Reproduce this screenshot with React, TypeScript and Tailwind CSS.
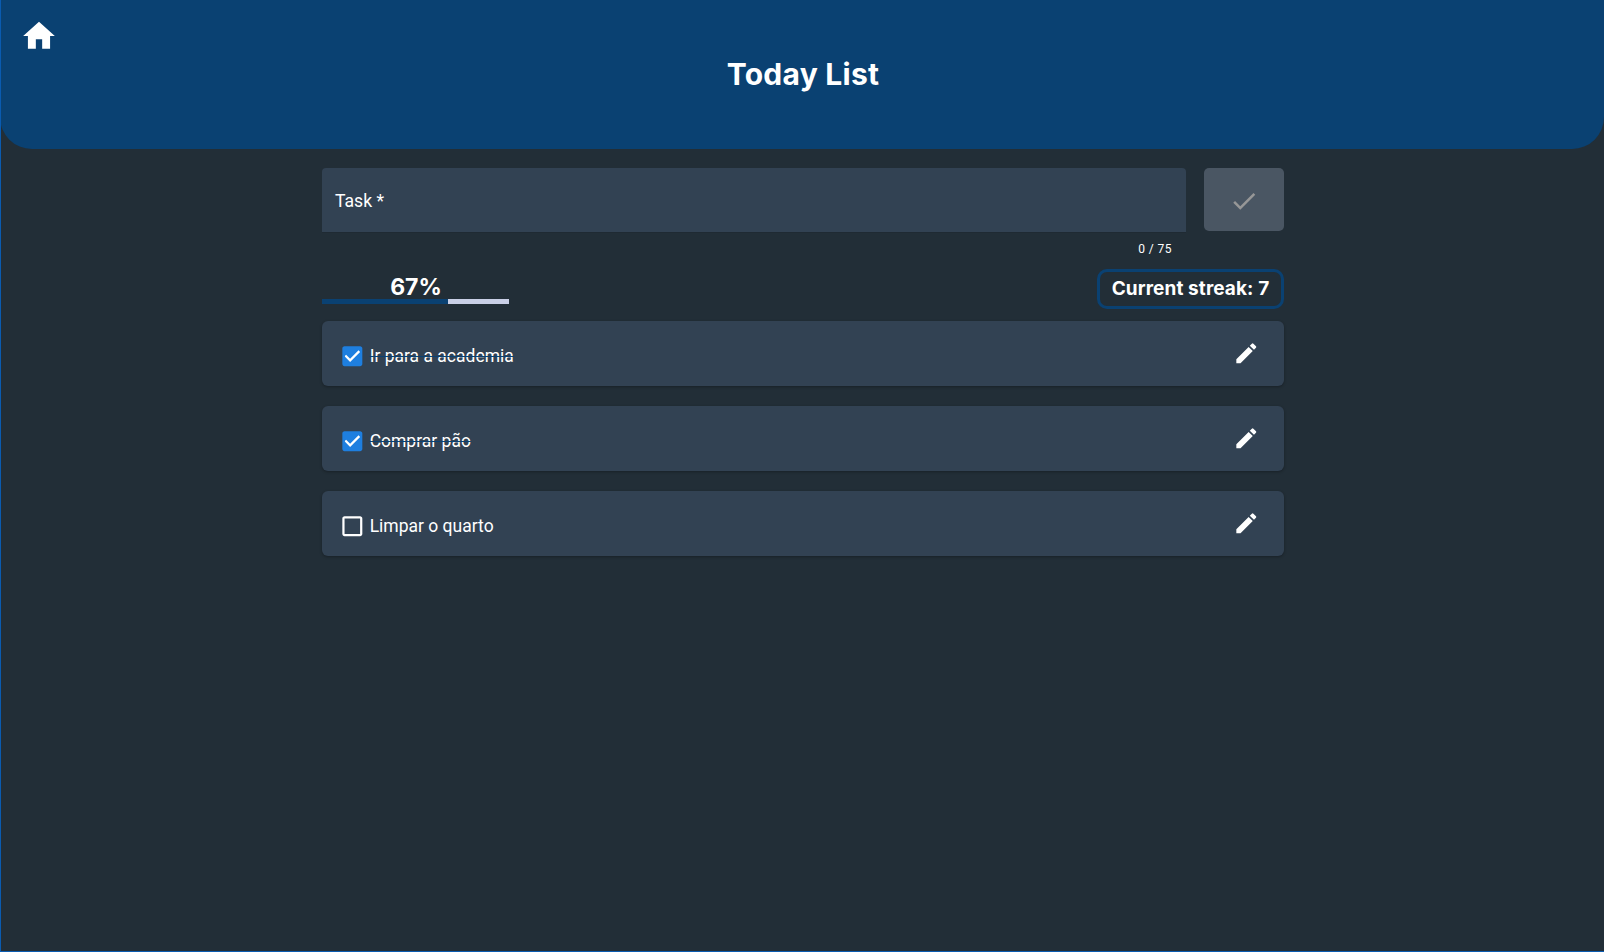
const tasks = [
  { label: "Ir para a academia", done: true },
  { label: "Comprar pão", done: true },
  { label: "Limpar o quarto", done: false },
];

function Pencil() {
  return (
    <svg viewBox="0 0 24 24" className="w-[26.67px] h-[26.67px] fill-white block -mt-[1px] mr-[1px]">
      <path d="M3 17.25V21h3.75L17.81 9.94l-3.75-3.75L3 17.25zM20.71 7.04c.39-.39.39-1.02 0-1.41l-2.34-2.34a.9959.9959 0 0 0-1.41 0l-1.83 1.83 3.75 3.75 1.83-1.83z" />
    </svg>
  );
}

function Box({ done }: { done: boolean }) {
  return done ? (
    <svg viewBox="0 0 24 24" className="w-[26.67px] h-[26.67px] block shrink-0">
      <rect x="5" y="5" width="14" height="14" fill="#fff" />
      <path fill="#1e7fe0" d="M19 3H5c-1.11 0-2 .9-2 2v14c0 1.1.89 2 2 2h14c1.11 0 2-.9 2-2V5c0-1.1-.89-2-2-2zm-9 14l-5-5 1.41-1.41L10 14.17l7.59-7.59L19 8l-9 9z" />
    </svg>
  ) : (
    <svg viewBox="0 0 24 24" className="w-[26.67px] h-[26.67px] block shrink-0 fill-white">
      <path d="M19 5v14H5V5h14m0-2H5c-1.1 0-2 .9-2 2v14c0 1.1.9 2 2 2h14c1.1 0 2-.9 2-2V5c0-1.1-.9-2-2-2z" />
    </svg>
  );
}

export default function App() {
  return (
    <div className="w-[1604px] h-[952px] overflow-hidden bg-[#222e37] border-l border-b border-[#0a5bb0] font-['Roboto',sans-serif] text-white flex flex-col">
      <header className="h-[149px] shrink-0 bg-[#0a4172] rounded-b-[32px] relative flex justify-center pt-[52px] pl-[2px] -ml-px">
        <svg viewBox="0 0 24 24" className="absolute left-5 top-[17px] w-[38px] h-[38px] fill-white">
          <path d="M10 20v-6h4v6h5v-8h3L12 3 2 12h3v8z" />
        </svg>
        <h1 className="font-['Inter',sans-serif] font-bold text-[30px] leading-[44px] h-[44px] tracking-[0.25px]">Today List</h1>
      </header>

      <main className="w-[962px] ml-[321px] flex flex-col">
        <div className="flex mt-[19px] gap-[18px] items-start">
          <div className="w-[864px] h-[65px] bg-[#324253] rounded-t-[4px] border-b border-[#1f2a33] pl-[13px] pt-[3px] flex items-center text-[17.6px]">
            Task *
          </div>
          <button className="w-[80px] h-[63px] bg-[#4a5663] rounded-[5px] flex items-center justify-center pt-[2px]">
            <svg viewBox="0 0 24 24" className="w-[30px] h-[30px] fill-[#979797]">
              <path d="M9 16.17 4.83 12l-1.42 1.41L9 19 21 7l-1.41-1.41z" />
            </svg>
          </button>
        </div>

        <div className="w-[864px] h-[16px] mt-[8px] pr-[14px] text-right text-[12px] leading-[16px] tracking-[0.45px]">0 / 75</div>

        <div className="flex justify-between items-end h-[40px] mt-[12px]">
          <div className="w-[187px] h-[35px] relative mb-[5px]">
            <div className="absolute inset-x-0 bottom-0 h-[5px] bg-[#c9cfe6]">
              <div className="h-full w-[67.4%] bg-[#0a4172]" />
            </div>
            <div className="absolute inset-x-0 top-[2px] pl-[1px] text-center font-['Inter',sans-serif] font-bold text-[23px] leading-[32px]">67%</div>
          </div>
          <div className="w-[187px] h-[40px] rounded-[10px] border-[3px] border-[#0a4172] flex items-center justify-center font-['Inter',sans-serif] font-bold text-[19px] tracking-[0.1px]">
            Current streak: 7
          </div>
        </div>

        <div className="flex flex-col gap-[20px] mt-[12px]">
          {tasks.map((t) => (
            <div key={t.label} className="h-[65px] bg-[#324253] rounded-[6px] shadow-[0_1px_3px_rgba(0,0,0,0.3)] flex items-center justify-between pl-[17px] pr-[23px]">
              <label className="flex items-center gap-[4px] pt-[5px]">
                <Box done={t.done} />
                <span className={t.done ? "text-[17.5px] line-through decoration-[#0a4172]" : "text-[17.5px]"}>{t.label}</span>
              </label>
              <Pencil />
            </div>
          ))}
        </div>
      </main>
    </div>
  );
}
